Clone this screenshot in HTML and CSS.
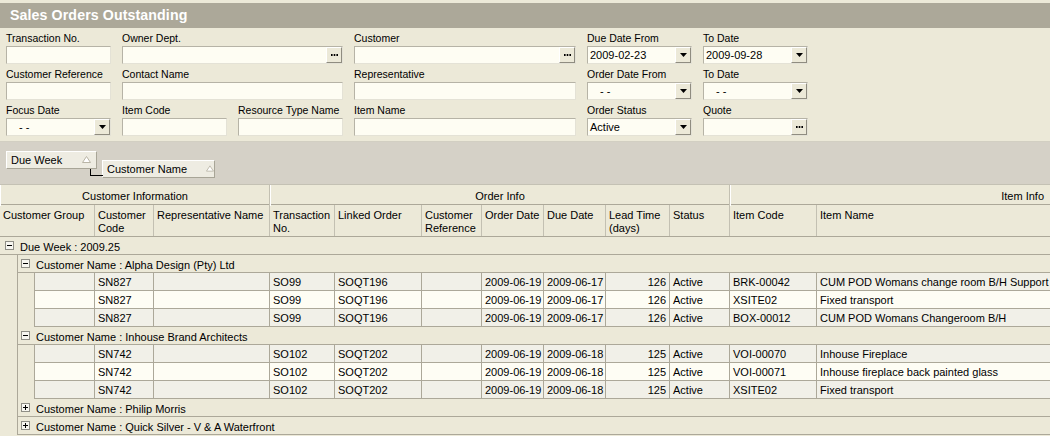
FILE: index.html
```html
<!DOCTYPE html>
<html>
<head>
<meta charset="utf-8">
<link rel="stylesheet" href="styles.css">
</head>
<body>
<div class="app">
  <div class="title">Sales Orders Outstanding</div>

  <div class="filters">
    <div class="field"><div class="lbl">Transaction No.</div><div class="input"></div></div>
    <div class="field span2"><div class="lbl">Owner Dept.</div><div class="input"><span class="val"></span><span class="btn"><svg width="7" height="2" viewBox="0 0 7 2"><rect x="0" y="0" width="1.6" height="2" fill="#000"/><rect x="2.7" y="0" width="1.6" height="2" fill="#000"/><rect x="5.4" y="0" width="1.6" height="2" fill="#000"/></svg></span></div></div>
    <div class="field"><div class="lbl">Customer</div><div class="input"><span class="val"></span><span class="btn"><svg width="7" height="2" viewBox="0 0 7 2"><rect x="0" y="0" width="1.6" height="2" fill="#000"/><rect x="2.7" y="0" width="1.6" height="2" fill="#000"/><rect x="5.4" y="0" width="1.6" height="2" fill="#000"/></svg></span></div></div>
    <div class="field"><div class="lbl">Due Date From</div><div class="input"><span class="val">2009-02-23</span><span class="btn"><svg width="7" height="4" viewBox="0 0 7 4"><path d="M0 0H7L3.5 4Z" fill="#000"/></svg></span></div></div>
    <div class="field"><div class="lbl">To Date</div><div class="input"><span class="val">2009-09-28</span><span class="btn"><svg width="7" height="4" viewBox="0 0 7 4"><path d="M0 0H7L3.5 4Z" fill="#000"/></svg></span></div></div>

    <div class="field"><div class="lbl">Customer Reference</div><div class="input"></div></div>
    <div class="field span2"><div class="lbl">Contact Name</div><div class="input"></div></div>
    <div class="field"><div class="lbl">Representative</div><div class="input"></div></div>
    <div class="field"><div class="lbl">Order Date From</div><div class="input"><span class="val empty">- -</span><span class="btn"><svg width="7" height="4" viewBox="0 0 7 4"><path d="M0 0H7L3.5 4Z" fill="#000"/></svg></span></div></div>
    <div class="field"><div class="lbl">To Date</div><div class="input"><span class="val empty">- -</span><span class="btn"><svg width="7" height="4" viewBox="0 0 7 4"><path d="M0 0H7L3.5 4Z" fill="#000"/></svg></span></div></div>

    <div class="field"><div class="lbl">Focus Date</div><div class="input"><span class="val empty">- -</span><span class="btn"><svg width="7" height="4" viewBox="0 0 7 4"><path d="M0 0H7L3.5 4Z" fill="#000"/></svg></span></div></div>
    <div class="field"><div class="lbl">Item Code</div><div class="input"></div></div>
    <div class="field"><div class="lbl">Resource Type Name</div><div class="input"></div></div>
    <div class="field"><div class="lbl">Item Name</div><div class="input"></div></div>
    <div class="field"><div class="lbl">Order Status</div><div class="input"><span class="val">Active</span><span class="btn"><svg width="7" height="4" viewBox="0 0 7 4"><path d="M0 0H7L3.5 4Z" fill="#000"/></svg></span></div></div>
    <div class="field"><div class="lbl">Quote</div><div class="input"><span class="val"></span><span class="btn"><svg width="7" height="2" viewBox="0 0 7 2"><rect x="0" y="0" width="1.6" height="2" fill="#000"/><rect x="2.7" y="0" width="1.6" height="2" fill="#000"/><rect x="5.4" y="0" width="1.6" height="2" fill="#000"/></svg></span></div></div>
  </div>

  <div class="grouppanel">
    <div class="gbox first">Due Week<svg class="sort" width="9" height="7" viewBox="0 0 9 7"><path d="M4.5 0.5L8.5 6.5H0.5Z" fill="#fff" stroke="#b9b5a6"/></svg></div>
    <div class="gbox second">Customer Name<svg class="sort" width="9" height="7" viewBox="0 0 9 7"><path d="M4.5 0.5L8.5 6.5H0.5Z" fill="#fff" stroke="#b9b5a6"/></svg></div>
  </div>

  <div class="grid">
    <div class="bands">
      <div class="band">Customer Information</div>
      <div class="band">Order Info</div>
      <div class="band right">Item Info</div>
    </div>
    <div class="cols">
      <div class="hc">Customer Group</div>
      <div class="hc">Customer<br>Code</div>
      <div class="hc">Representative Name</div>
      <div class="hc">Transaction<br>No.</div>
      <div class="hc">Linked Order</div>
      <div class="hc">Customer<br>Reference</div>
      <div class="hc">Order Date</div>
      <div class="hc">Due Date</div>
      <div class="hc">Lead Time<br>(days)</div>
      <div class="hc">Status</div>
      <div class="hc">Item Code</div>
      <div class="hc last">Item Name</div>
    </div>

    <div class="grow lvl0"><svg class="exp" width="9" height="9" viewBox="0 0 9 9"><rect x="0.5" y="0.5" width="8" height="8" fill="#f7f6f0" stroke="#8f8e86"/><path d="M2 4.5H7" stroke="#000"/></svg><span>Due Week : 2009.25</span></div>
    <div class="lvl1">
      <div class="grow"><svg class="exp" width="9" height="9" viewBox="0 0 9 9"><rect x="0.5" y="0.5" width="8" height="8" fill="#f7f6f0" stroke="#8f8e86"/><path d="M2 4.5H7" stroke="#000"/></svg><span>Customer Name : Alpha Design (Pty) Ltd</span></div>
      <div class="lvl2">
        <div class="drow odd"><div></div><div>SN827</div><div></div><div>SO99</div><div>SOQT196</div><div></div><div>2009-06-19</div><div>2009-06-17</div><div class="num">126</div><div>Active</div><div>BRK-00042</div><div>CUM POD Womans change room B/H Support</div></div>
        <div class="drow even"><div></div><div>SN827</div><div></div><div>SO99</div><div>SOQT196</div><div></div><div>2009-06-19</div><div>2009-06-17</div><div class="num">126</div><div>Active</div><div>XSITE02</div><div>Fixed transport</div></div>
        <div class="drow odd"><div></div><div>SN827</div><div></div><div>SO99</div><div>SOQT196</div><div></div><div>2009-06-19</div><div>2009-06-17</div><div class="num">126</div><div>Active</div><div>BOX-00012</div><div>CUM POD Womans Changeroom B/H</div></div>
      </div>
      <div class="grow"><svg class="exp" width="9" height="9" viewBox="0 0 9 9"><rect x="0.5" y="0.5" width="8" height="8" fill="#f7f6f0" stroke="#8f8e86"/><path d="M2 4.5H7" stroke="#000"/></svg><span>Customer Name : Inhouse Brand Architects</span></div>
      <div class="lvl2">
        <div class="drow odd"><div></div><div>SN742</div><div></div><div>SO102</div><div>SOQT202</div><div></div><div>2009-06-19</div><div>2009-06-18</div><div class="num">125</div><div>Active</div><div>VOI-00070</div><div>Inhouse Fireplace</div></div>
        <div class="drow even"><div></div><div>SN742</div><div></div><div>SO102</div><div>SOQT202</div><div></div><div>2009-06-19</div><div>2009-06-18</div><div class="num">125</div><div>Active</div><div>VOI-00071</div><div>Inhouse fireplace back painted glass</div></div>
        <div class="drow odd"><div></div><div>SN742</div><div></div><div>SO102</div><div>SOQT202</div><div></div><div>2009-06-19</div><div>2009-06-18</div><div class="num">125</div><div>Active</div><div>XSITE02</div><div>Fixed transport</div></div>
      </div>
      <div class="grow"><svg class="exp" width="9" height="9" viewBox="0 0 9 9"><rect x="0.5" y="0.5" width="8" height="8" fill="#f7f6f0" stroke="#8f8e86"/><path d="M2 4.5H7M4.5 2V7" stroke="#000"/></svg><span>Customer Name : Philip Morris</span></div>
      <div class="grow"><svg class="exp" width="9" height="9" viewBox="0 0 9 9"><rect x="0.5" y="0.5" width="8" height="8" fill="#f7f6f0" stroke="#8f8e86"/><path d="M2 4.5H7M4.5 2V7" stroke="#000"/></svg><span>Customer Name : Quick Silver - V &amp; A Waterfront</span></div>
    </div>
  </div>
</div>
</body>
</html>
```

FILE: styles.css
```css
* { box-sizing: border-box; }
html, body { margin: 0; padding: 0; }
body {
  width: 1050px;
  height: 436px;
  overflow: hidden;
  background: #ece9d8;
  font-family: "Liberation Sans", Arial, sans-serif;
  font-size: 11px;
  color: #000;
}
.app { padding-top: 3px; }

.title {
  height: 25px;
  background: #aca899;
  color: #fff;
  font-weight: bold;
  font-size: 14.2px;
  line-height: 25px;
  padding-left: 10px;
  letter-spacing: 0.1px;
}

.filters {
  display: grid;
  grid-template-columns: 105px 105px 105px 222px 105px 105px;
  column-gap: 11px;
  row-gap: 2px;
  padding: 2px 0 5px 6px;
  border-bottom: 1px solid #d2cfc2;
}
.field.span2 { grid-column: span 2; }
.lbl {
  height: 16px;
  line-height: 16px;
  font-size: 10.5px;
  white-space: nowrap;
}
.input {
  height: 18px;
  display: flex;
  align-items: stretch;
  background: #fefdf3;
  border-style: solid;
  border-width: 1px;
  border-color: #b6b3a6 #e4e2d6 #e4e2d6 #b6b3a6;
}
.val {
  flex: 1;
  line-height: 17px;
  padding-left: 2px;
  font-size: 11px;
  white-space: nowrap;
}
.val.empty { padding-left: 12px; }
.btn {
  width: 16px;
  display: flex;
  align-items: center;
  justify-content: center;
  background: #ece9d8;
  border-style: solid;
  border-width: 1px;
  border-color: #fff #8f8c80 #8f8c80 #fff;
}

.grouppanel {
  height: 43px;
  background: #d5d1c7;
  display: flex;
  align-items: flex-start;
  padding: 9px 0 0 6px;
  border-bottom: 1px solid #c4c1b4;
}
.gbox {
  position: relative;
  height: 18px;
  line-height: 16px;
  padding-left: 4px;
  background: #eeece2;
  border-style: solid;
  border-width: 1px;
  border-color: #fff #a8a597 #a8a597 #fff;
  display: flex;
  align-items: flex-start;
  white-space: nowrap;
}
.gbox .sort { margin-top: 4px; }
.gbox.first { width: 91px; }
.gbox.first .sort { margin-left: 20px; }
.gbox.second { width: 113px; margin-left: 5px; margin-top: 9px; }
.gbox.second .sort { margin-left: 19px; }
.gbox.second::before {
  content: "";
  position: absolute;
  left: -13px;
  top: 8px;
  width: 12px;
  height: 6px;
  border-left: 1px solid #000;
  border-bottom: 1px solid #000;
}

.bands {
  display: grid;
  grid-template-columns: 270px 460px 1fr;
  height: 20px;
  border-bottom: 1px solid #aca899;
}
.band {
  text-align: center;
  line-height: 19px;
  padding-top: 2px;
  border-right: 1px solid #c3c0b2;
  border-left: 1px solid #fff;
}
.band.right { text-align: right; padding-right: 6px; border-right: none; }

.cols {
  display: grid;
  grid-template-columns: 95px 59px 116px 65px 87px 60px 62px 62px 64px 60px 87px 1fr;
  height: 32px;
  border-bottom: 1px solid #aca899;
}
.hc {
  padding: 4px 0 0 3px;
  line-height: 13px;
  border-right: 1px solid #c3c0b2;
  white-space: nowrap;
  overflow: hidden;
}
.hc.last { border-right: none; }

.grow {
  height: 18px;
  display: flex;
  align-items: flex-start;
  border-bottom: 1px solid #aca899;
  white-space: nowrap;
}
.grow span { line-height: 17px; padding-top: 2px; }
.grow .exp { margin: 4px 6px 0 3px; flex: none; }
.lvl0 { padding-left: 2px; }
.lvl1 {
  margin-left: 17px;
  border-left: 1px solid #aca899;
}
.lvl2 {
  margin-left: 16px;
  border-left: 1px solid #aca899;
}
.drow {
  display: grid;
  grid-template-columns: 60px 59px 116px 65px 87px 60px 62px 62px 64px 60px 87px 1fr;
  height: 18px;
  border-bottom: 1px solid #aca899;
}
.drow.odd { background: #f1f0e8; }
.drow.even { background: #fefdf4; }
.drow > div {
  padding: 1px 0 0 3px;
  line-height: 16px;
  border-right: 1px solid #aca899;
  white-space: nowrap;
  overflow: hidden;
}
.drow > div:last-child { border-right: none; }
.drow > .num { text-align: right; padding-right: 3px; }
```
